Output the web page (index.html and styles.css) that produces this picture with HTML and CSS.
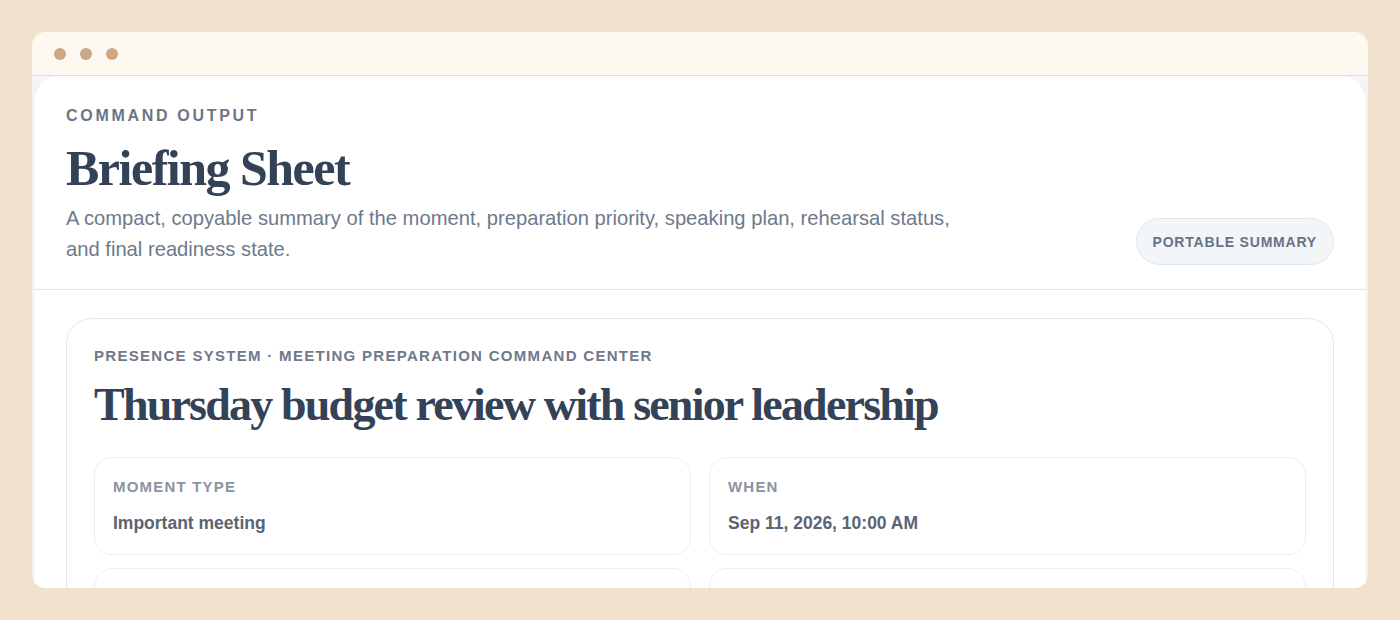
FILE: index.html
```html
<!DOCTYPE html>
<html>
<head>
<meta charset="utf-8">
<link rel="stylesheet" href="styles.css">
</head>
<body>
<div class="window">
  <div class="titlebar">
    <span class="dot"></span><span class="dot"></span><span class="dot"></span>
  </div>
  <div class="body">
    <div class="sheet">
      <header class="sheet-head">
        <div class="head-text">
          <div class="eyebrow">COMMAND OUTPUT</div>
          <h1 class="title">Briefing Sheet</h1>
          <p class="desc">A compact, copyable summary of the moment, preparation priority, speaking plan, rehearsal status, and final readiness state.</p>
        </div>
        <span class="pill">PORTABLE SUMMARY</span>
      </header>
      <div class="sheet-main">
        <section class="card">
          <div class="kicker">PRESENCE SYSTEM · MEETING PREPARATION COMMAND CENTER</div>
          <h2 class="card-title">Thursday budget review with senior leadership</h2>
          <div class="grid">
            <div class="cell"><div class="label">MOMENT TYPE</div><div class="value">Important meeting</div></div>
            <div class="cell"><div class="label">WHEN</div><div class="value">Sep 11, 2026, 10:00 AM</div></div>
            <div class="cell"><div class="label">PRIORITY</div><div class="value">High</div></div>
            <div class="cell"><div class="label">STATUS</div><div class="value">Ready</div></div>
          </div>
        </section>
      </div>
    </div>
  </div>
</div>
</body>
</html>
```

FILE: styles.css
```css
* { box-sizing: border-box; }
html, body { margin: 0; padding: 0; }
body {
  background: #f0e2cd;
  padding: 32px 32px 0 32px;
  height: 620px;
  overflow: hidden;
  font-family: "Liberation Sans", Arial, sans-serif;
}
.window {
  width: 1336px;
  height: 556px;
  border-radius: 14px;
  overflow: hidden;
  background: #f4f5f7;
  display: flex;
  flex-direction: column;
}
.titlebar {
  height: 44px;
  background: #fdf8f0;
  border-bottom: 1px solid #e6dccd;
  display: flex;
  align-items: center;
  gap: 14px;
  padding-left: 22px;
  flex-shrink: 0;
}
.dot {
  width: 12px;
  height: 12px;
  border-radius: 50%;
  background: #caa888;
}
.body {
  flex: 1;
  padding: 0 1px;
  overflow: hidden;
}
.sheet {
  background: #fff;
  border-radius: 26px 26px 0 0;
  height: 100%;
  border-left: 1px solid #eceef2;
  border-right: 1px solid #eceef2;
}
.sheet-head {
  display: flex;
  justify-content: space-between;
  align-items: flex-end;
  padding: 31px 32px 24px 32px;
  border-bottom: 1.5px solid #e5e7eb;
}
.eyebrow {
  font-size: 16px;
  font-weight: 700;
  letter-spacing: 2.7px;
  color: #6b7585;
  line-height: 18px;
}
.title {
  font-family: "Liberation Serif", "Times New Roman", serif;
  font-weight: 700;
  font-size: 50px;
  letter-spacing: -1.5px;
  color: #334257;
  margin: 13px 0 5px 0;
  line-height: 60px;
}
.desc {
  margin: 0;
  font-size: 20.2px;
  line-height: 31px;
  color: #6d7a8c;
  max-width: 900px;
}
.pill {
  height: 47px;
  padding: 0 16px;
  border-radius: 24px;
  background: #f3f6f9;
  border: 1px solid #e1e6ec;
  display: flex;
  align-items: center;
  font-size: 14px;
  font-weight: 700;
  letter-spacing: 0.8px;
  color: #677386;
  margin-bottom: 0;
}
.sheet-main {
  padding: 28px 32px 0 32px;
}
.card {
  border: 1.5px solid #e5e7eb;
  border-radius: 26px;
  padding: 28px 27px 20px 27px;
}
.kicker {
  font-size: 15px;
  font-weight: 700;
  letter-spacing: 1.3px;
  color: #6f7988;
  line-height: 18px;
}
.card-title {
  font-family: "Liberation Serif", "Times New Roman", serif;
  font-weight: 700;
  font-size: 46px;
  letter-spacing: -1.8px;
  color: #334257;
  margin: 12px 0 24px 0;
  line-height: 56px;
}
.grid {
  display: grid;
  grid-template-columns: 1fr 1fr;
  gap: 13px 18px;
}
.cell {
  border: 1.5px solid #eceef1;
  border-radius: 18px;
  padding: 21px 18px 22px 18px;
  height: 98px;
}
.label {
  font-size: 15px;
  font-weight: 700;
  letter-spacing: 1.2px;
  color: #8a93a1;
  line-height: 16px;
}
.value {
  margin-top: 18px;
  font-size: 17.5px;
  font-weight: 700;
  color: #5a6473;
  line-height: 20px;
}
```
